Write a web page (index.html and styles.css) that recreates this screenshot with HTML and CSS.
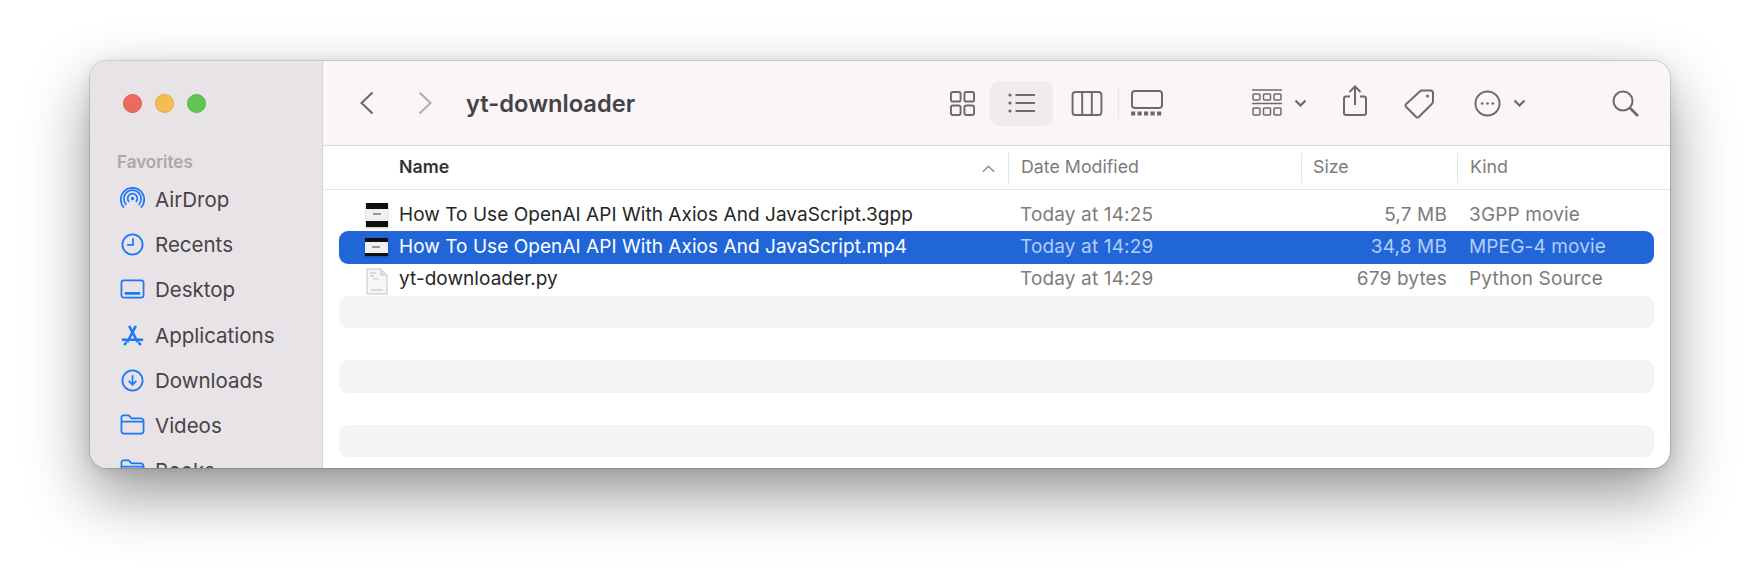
FILE: index.html
```html
<!DOCTYPE html>
<html lang="en">
  <head>
    <meta charset="UTF-8" />
    <title>yt-downloader</title>
    <link rel="stylesheet" href="styles.css">
  </head>
  <body>
    <div class="window">
      <aside class="sidebar">
        <div class="lights">
          <span class="light red"></span>
          <span class="light yellow"></span>
          <span class="light green"></span>
        </div>
        <div class="side-title">Favorites</div>
        <div class="side-item">
          <svg class="side-icon" viewBox="0 0 26 26"><circle cx="13" cy="12" r="1.8" fill="#1a78f5" stroke="none"/><path d="M9.5 15.5a5 5 0 1 1 7 0M6.6 18.5a9 9 0 1 1 12.8 0M4.2 21.5a12.2 12.2 0 1 1 17.6 0"/></svg>
          <span>AirDrop</span>
        </div>
        <div class="side-item">
          <svg class="side-icon" viewBox="0 0 26 26"><circle cx="13" cy="13" r="10.500"/><path d="M13.500 6.500v7H7.500"/></svg>
          <span>Recents</span>
        </div>
        <div class="side-item">
          <svg class="side-icon" viewBox="0 0 26 26"><rect x="1.5" y="3.5" width="23" height="18" rx="2.5"/><path d="M5 17h16" stroke-width="3"/></svg>
          <span>Desktop</span>
        </div>
        <div class="side-item">
          <svg class="side-icon" viewBox="0 0 26 26"><path d="M9.500 3l9 17M16.500 3L7.500 20M2 17.500h22M4.500 23l2-3M21.500 23l-2-3" stroke-width="2.600"/></svg>
          <span>Applications</span>
        </div>
        <div class="side-item">
          <svg class="side-icon" viewBox="0 0 26 26"><circle cx="13" cy="13" r="10.500"/><path d="M13 7.500v10M9 13.500l4 4 4-4"/></svg>
          <span>Downloads</span>
        </div>
        <div class="side-item">
          <svg class="side-icon" viewBox="0 0 26 26"><path d="M1.500 7V4.500a2 2 0 0 1 2-2h5.500l3 3h10a3 3 0 0 1 2.500 2.500v11a2.500 2.500 0 0 1-2.500 2.500H4a2.500 2.500 0 0 1-2.500-2.500zM1.500 9h23"/></svg>
          <span>Videos</span>
        </div>
        <div class="side-item">
          <svg class="side-icon" viewBox="0 0 26 26"><path d="M1.500 7V4.500a2 2 0 0 1 2-2h5.500l3 3h10a3 3 0 0 1 2.500 2.500v11a2.500 2.500 0 0 1-2.500 2.500H4a2.500 2.500 0 0 1-2.500-2.500zM1.500 9h23"/></svg>
          <span>Books</span>
        </div>
      </aside>

      <main class="content">
        <header class="toolbar">
          <svg class="tool back" viewBox="0 0 14 24"><path d="M12.500 1.500L1.500 12l11 10.500"/></svg>
          <svg class="tool forward" viewBox="0 0 14 24"><path d="M1.500 1.500L12.500 12l-11 10.500"/></svg>
          <h1 class="title">yt-downloader</h1>

          <svg class="tool icon-grid" viewBox="0 0 26 26"><rect x="1" y="1" width="10" height="10" rx="2"/><rect x="15" y="1" width="10" height="10" rx="2"/><rect x="1" y="15" width="10" height="10" rx="2"/><rect x="15" y="15" width="10" height="10" rx="2"/></svg>
          <div class="tool-active">
            <svg class="tool icon-list" viewBox="0 0 28 20"><circle cx="2" cy="2" r="1.600" class="dot"/><circle cx="2" cy="10" r="1.600" class="dot"/><circle cx="2" cy="18" r="1.600" class="dot"/><path d="M7.500 2H27M7.500 10H27M7.500 18H27"/></svg>
          </div>
          <svg class="tool icon-columns" viewBox="0 0 32 26"><rect x="1" y="1" width="30" height="24" rx="3"/><path d="M11 1v24M21 1v24"/></svg>
          <span class="tool-sep"></span>
          <svg class="tool icon-gallery" viewBox="0 0 32 26"><rect x="1" y="1" width="30" height="17" rx="3"/><path d="M0 23.500h32" stroke-width="4" stroke-dasharray="4.200 2.300"/></svg>

          <svg class="tool icon-group" viewBox="0 0 30 28"><path d="M0 1h30M0 14.500h30" stroke-width="1.500"/><rect x="1" y="5" width="7" height="6" rx="1" stroke-width="1.500"/><rect x="11.500" y="5" width="7" height="6" rx="1" stroke-width="1.500"/><rect x="22" y="5" width="7" height="6" rx="1" stroke-width="1.500"/><rect x="1" y="19" width="7" height="7" rx="1" stroke-width="1.500"/><rect x="11.500" y="19" width="7" height="7" rx="1" stroke-width="1.500"/><rect x="22" y="19" width="7" height="7" rx="1" stroke-width="1.500"/></svg>
          <svg class="tool chev chev-group" viewBox="0 0 12 8"><path d="M1 1.500l5 5 5-5"/></svg>
          <svg class="tool icon-share" viewBox="0 0 24 31"><path d="M7 11.500H3a2 2 0 0 0-2 2V28a2 2 0 0 0 2 2h18a2 2 0 0 0 2-2V13.500a2 2 0 0 0-2-2h-4M12 20V1.500M6.500 7L12 1.500 17.500 7"/></svg>
          <svg class="tool icon-tag" viewBox="0 0 31 31"><path d="M18 2.500h8.500a2.500 2.500 0 0 1 2.500 2.500v8.500a3 3 0 0 1-1 2.200L15 28.800a2 2 0 0 1-3 0L2.200 19a2 2 0 0 1 0-3L15.800 3.500a3 3 0 0 1 2.200-1z"/><circle cx="23.500" cy="8" r="1.500" class="dot"/></svg>
          <svg class="tool icon-more" viewBox="0 0 28 28"><circle cx="14" cy="14" r="12.500"/><circle cx="8.500" cy="14" r="1.400" class="dot"/><circle cx="14" cy="14" r="1.400" class="dot"/><circle cx="19.500" cy="14" r="1.400" class="dot"/></svg>
          <svg class="tool chev chev-more" viewBox="0 0 12 8"><path d="M1 1.500l5 5 5-5"/></svg>
          <svg class="tool icon-search" viewBox="0 0 27 27"><circle cx="11" cy="11" r="9.500"/><path d="M18 18l8 8" stroke-width="2.600"/></svg>
        </header>

        <div class="list-head">
          <div class="col-name head-name">
            Name
            <svg class="sort" viewBox="0 0 14 8"><path d="M1 7l6-6 6 6"/></svg>
          </div>
          <div class="col-date head-cell">Date Modified</div>
          <div class="col-size head-cell">Size</div>
          <div class="col-kind head-cell">Kind</div>
        </div>

        <div class="rows">
          <div class="row">
            <div class="col-name"><span class="thumb thumb-tall"><i class="thumb-page"></i></span>How To Use OpenAI API With Axios And JavaScript.3gpp</div>
            <div class="col-date">Today at 14:25</div>
            <div class="col-size">5,7 MB</div>
            <div class="col-kind">3GPP movie</div>
          </div>
          <div class="row selected">
            <div class="col-name"><span class="thumb thumb-wide"><i class="thumb-page"></i></span>How To Use OpenAI API With Axios And JavaScript.mp4</div>
            <div class="col-date">Today at 14:29</div>
            <div class="col-size">34,8 MB</div>
            <div class="col-kind">MPEG-4 movie</div>
          </div>
          <div class="row">
            <div class="col-name">
              <span class="thumb">
                <svg class="doc" viewBox="0 0 22 27"><path d="M1 1h14l6 6v19H1z" fill="#f6f6f6" stroke="#c4c4c4"/><path d="M15 1v6h6" fill="#e4e4e4" stroke="#c4c4c4"/><path d="M4 5h6M4 8h4M7 11h5M5 22h12" stroke="#bdbdbd" stroke-width="1" fill="none"/></svg>
              </span>yt-downloader.py
            </div>
            <div class="col-date">Today at 14:29</div>
            <div class="col-size">679 bytes</div>
            <div class="col-kind">Python Source</div>
          </div>
          <div class="row stripe"></div>
          <div class="row"></div>
          <div class="row stripe"></div>
          <div class="row"></div>
          <div class="row stripe"></div>
        </div>
      </main>
    </div>
  </body>
</html>
```

FILE: styles.css
```css
* {
  box-sizing: border-box;
}
body {
  margin: 0;
  height: 587px;
  padding: 61px 90px 0;
  background: #ffffff;
  overflow: hidden;
  font-family: Inter, "Liberation Sans", sans-serif;
}
svg {
  display: block;
  flex: none;
  fill: none;
}
.window {
  display: flex;
  width: 1580px;
  height: 407px;
  border-radius: 17px;
  overflow: hidden;
  background: #ffffff;
  box-shadow: 0 0 0 1px rgba(0, 0, 0, 0.12), 0 26px 62px rgba(0, 0, 0, 0.42), 0 2px 14px rgba(0, 0, 0, 0.1);
}

/* sidebar */
.sidebar {
  width: 233px;
  flex: none;
  padding: 0 0 0 27px;
  background: #e8e3e6;
  border-right: 1px solid #d8d3d6;
}
.lights {
  display: flex;
  gap: 13px;
  padding: 33px 0 0 6px;
}
.light {
  width: 19px;
  height: 19px;
  border-radius: 50%;
}
.red {
  background: #ee6a5f;
  border: 1px solid #e0584e;
}
.yellow {
  background: #f5bd4f;
  border: 1px solid #e3a93f;
}
.green {
  background: #61c554;
  border: 1px solid #52b347;
}
.side-title {
  margin-top: 39px;
  font-size: 17px;
  font-weight: 600;
  line-height: 20px;
  color: #aba7aa;
}
.side-item {
  display: flex;
  align-items: center;
  gap: 10px;
  height: 45.200px;
  padding-left: 3px;
  font-size: 20.500px;
  color: #464446;
}
.side-item:nth-of-type(3) {
  margin-top: 5px;
}
.side-icon {
  width: 25px;
  height: 25px;
  stroke: #1a78f5;
  stroke-width: 1.800;
}

/* toolbar */
.content {
  flex: 1;
  min-width: 0;
}
.toolbar {
  display: flex;
  align-items: center;
  height: 85px;
  padding-left: 37px;
  background: #faf5f9;
  border-bottom: 1px solid #dcd8db;
}
.tool {
  stroke: #6d696c;
  stroke-width: 2;
}
.dot {
  fill: #6d696c;
  stroke: none;
}
.back,
.forward {
  width: 14px;
  height: 24px;
  stroke-width: 2.200px;
}
.forward {
  margin-left: 44px;
  stroke: #b3afb2;
}
.title {
  width: 484px;
  margin: 0 0 0 34px;
  font-size: 23.700px;
  font-weight: 600;
  color: #454345;
}
.icon-grid {
  width: 25px;
  height: 25px;
}
.tool-active {
  display: flex;
  align-items: center;
  justify-content: center;
  width: 63px;
  height: 45px;
  margin-left: 15px;
  border-radius: 9px;
  background: #efebee;
}
.icon-list {
  width: 28px;
  height: 20px;
}
.icon-columns {
  width: 32px;
  height: 25px;
  margin-left: 18px;
}
.tool-sep {
  width: 1px;
  height: 32px;
  margin-left: 15px;
  background: #e8e4e7;
}
.icon-gallery {
  width: 32px;
  height: 26px;
  margin-left: 12px;
}
.icon-group {
  width: 30px;
  height: 28px;
  margin-left: 89px;
}
.chev {
  width: 13px;
  height: 8px;
  stroke-width: 2.200px;
}
.chev-group {
  margin-left: 12px;
}
.icon-share {
  width: 24px;
  height: 31px;
  margin: -6px 0 0 36px;
}
.icon-tag {
  width: 31px;
  height: 31px;
  margin-left: 37px;
}
.icon-more {
  width: 27px;
  height: 27px;
  margin-left: 39px;
}
.chev-more {
  margin-left: 12px;
}
.icon-search {
  width: 27px;
  height: 27px;
  margin-left: 86px;
}

/* file list */
.list-head {
  display: flex;
  align-items: center;
  height: 44px;
  padding: 0 16px;
  border-bottom: 1px solid #e6e6e6;
  font-size: 17.800px;
  color: #7c7c7c;
}
.col-name {
  display: flex;
  align-items: center;
  width: 669px;
  flex: none;
  padding-left: 60px;
}
.col-date {
  width: 293px;
  flex: none;
  padding-left: 12px;
}
.col-size {
  width: 156px;
  flex: none;
  padding-left: 11px;
}
.col-kind {
  padding-left: 12px;
}
.head-name {
  position: relative;
  height: 30px;
  padding-bottom: 2px;
  font-weight: 600;
  color: #333333;
}
.sort {
  position: absolute;
  top: 12px;
  right: 13px;
  width: 13px;
  height: 8px;
  stroke: #8a8a8a;
  stroke-width: 1.500;
}
.head-cell {
  height: 30px;
  line-height: 28px;
  border-left: 1px solid #e4e4e4;
}
.rows {
  padding: 9px 16px 0;
}
.row {
  display: flex;
  align-items: center;
  height: 32.300px;
  padding-bottom: 2px;
  border-radius: 9px;
  font-size: 19px;
  letter-spacing: 0.150px;
  color: #7c7c7c;
}
.row .col-name {
  letter-spacing: 0.050px;
  color: #262626;
}
.row .col-date {
  padding-left: 12px;
}
.row .col-size {
  padding-right: 10px;
  text-align: right;
}
.row .col-kind {
  padding-left: 12px;
}
.selected {
  background: #2166d9;
  color: #b4cdf5;
}
.row.selected .col-name {
  color: #ffffff;
}
.stripe {
  background: #f3f5f4;
}
.thumb {
  position: relative;
  width: 22px;
  height: 24px;
  margin: 2px 11px 0 -33px;
  flex: none;
}
.thumb-tall,
.thumb-wide {
  background: #0f0f0f;
  box-shadow: 0 1px 2px rgba(0, 0, 0, 0.25);
}
.thumb-wide {
  width: 23px;
  height: 18px;
  margin-left: -34px;
}
.thumb-page {
  display: block;
  position: absolute;
  left: 0;
  right: 0;
  top: 6px;
  bottom: 6px;
  background: #f1f1f1;
}
.thumb-wide .thumb-page {
  top: 4px;
  bottom: 3px;
}
.thumb-page::after {
  content: "";
  position: absolute;
  left: 7px;
  top: 4px;
  width: 8px;
  height: 2px;
  background: #9a9a9a;
}
.doc {
  width: 22px;
  height: 27px;
}
```
